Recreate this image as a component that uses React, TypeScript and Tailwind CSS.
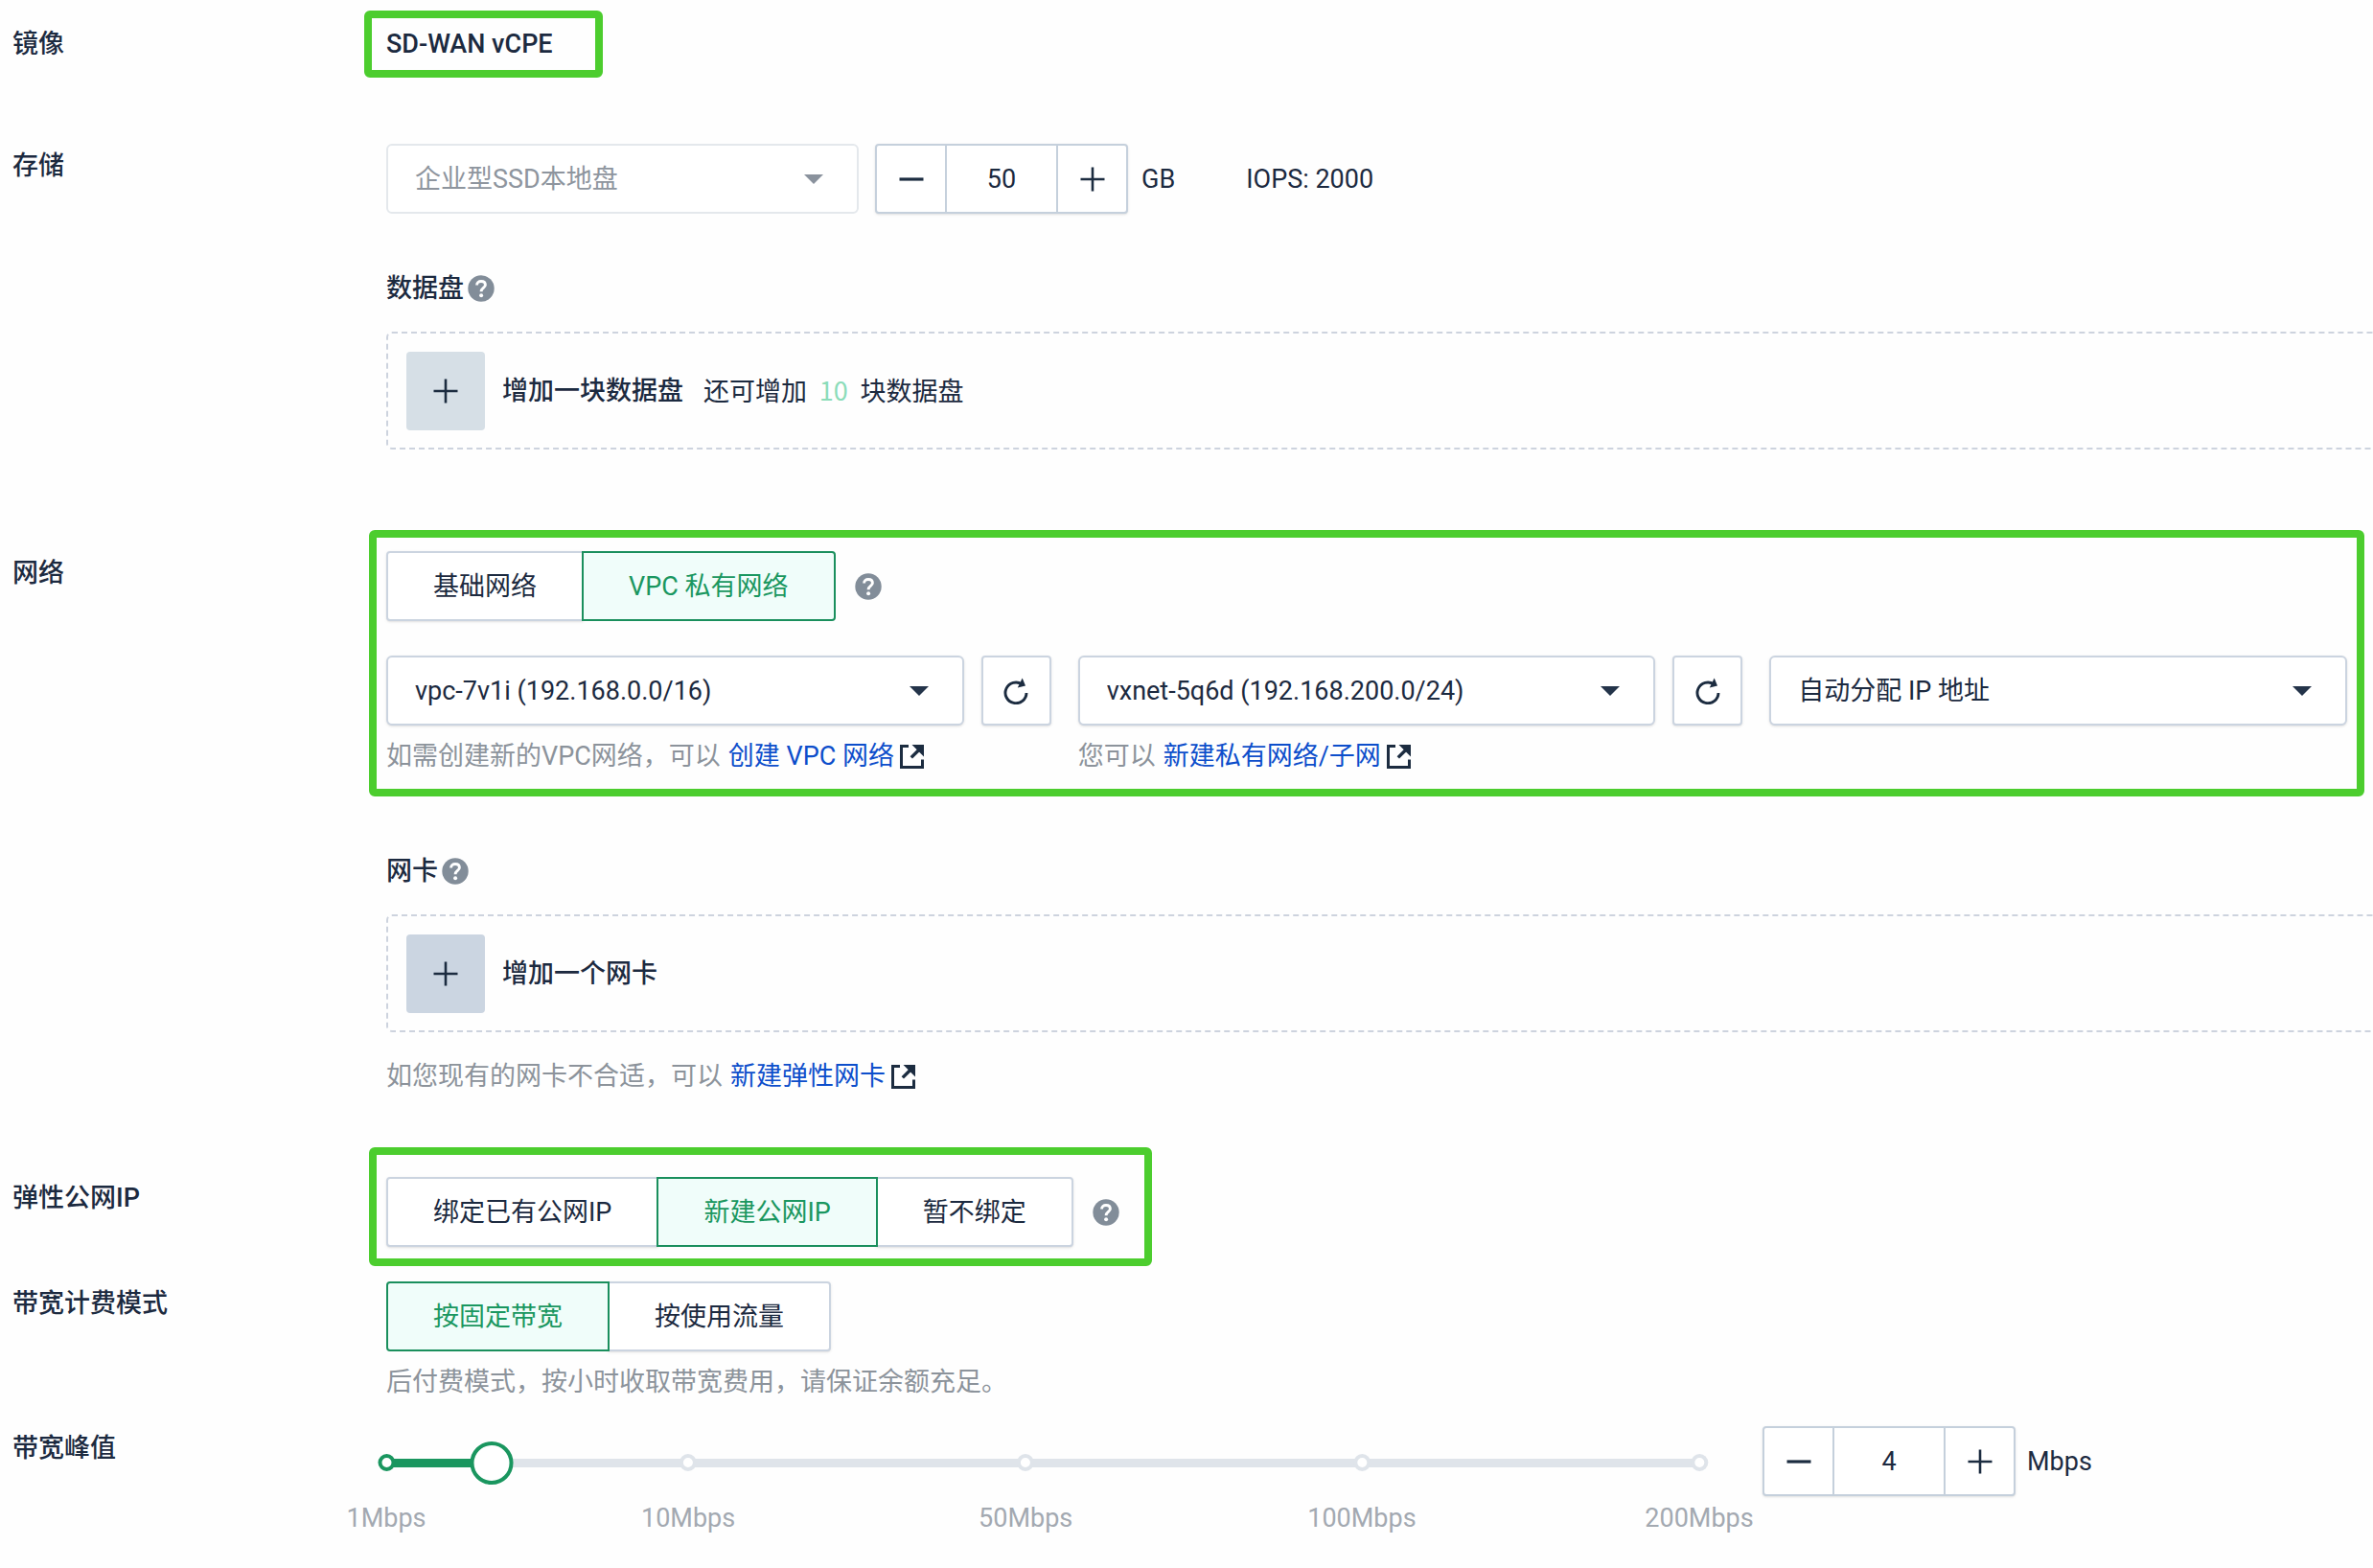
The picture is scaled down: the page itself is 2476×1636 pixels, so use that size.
import { useState } from "react"
import type { ReactNode } from "react"
import clsx from "clsx"

const MARKS = [
  { value: 1, pos: 0 },
  { value: 10, pos: 23 },
  { value: 50, pos: 48.7 },
  { value: 100, pos: 74.3 },
  { value: 200, pos: 100 },
]

// the marks are not evenly spaced, so interpolate inside each segment
function valueToPos(value: number) {
  for (let i = 1; i < MARKS.length; i++) {
    const a = MARKS[i - 1]
    const b = MARKS[i]
    if (value <= b.value) return a.pos + ((value - a.value) / (b.value - a.value)) * (b.pos - a.pos)
  }
  return 100
}

function posToValue(pos: number) {
  for (let i = 1; i < MARKS.length; i++) {
    const a = MARKS[i - 1]
    const b = MARKS[i]
    if (pos <= b.pos) return Math.round(a.value + ((pos - a.pos) / (b.pos - a.pos)) * (b.value - a.value))
  }
  return 200
}

function HelpIcon() {
  return (
    <svg className="w-7 h-7 shrink-0" viewBox="0 0 28 28" fill="none" aria-hidden="true">
      <circle cx="14" cy="14" r="13.7" fill="#828d99" />
      <path
        d="M9.6 10.4C9.6 7.9 11.4 6.5 14 6.5s4.4 1.5 4.4 3.8c0 3.1-4.3 3.3-4.3 6.9"
        stroke="#fff"
        strokeWidth="2.9"
      />
      <circle cx="14.1" cy="21.3" r="2" fill="#fff" />
    </svg>
  )
}

function ExternalIcon() {
  return (
    <svg className="w-[25px] h-[25px] shrink-0 ml-1.5" viewBox="0 0 25 25" fill="none" aria-hidden="true">
      <path d="M9 1.5H1.5V23.5H23.5V15.5" stroke="#1c2c40" strokeWidth="3" />
      <path d="M12.5 0H25V12.5Z" fill="#1c2c40" />
      <path d="M11.8 13.4L20 5.2" stroke="#1c2c40" strokeWidth="3.4" />
    </svg>
  )
}

function RefreshIcon() {
  return (
    <svg className="w-[26px] h-7" viewBox="0 0 26 28" fill="none" aria-hidden="true">
      <path d="M24 16A11 10.8 0 1 1 19.4 7.1" stroke="#1c2c40" strokeWidth="2.9" />
      <path d="M19.7 .6L23 8.6L14.8 10.6Z" fill="#1c2c40" />
    </svg>
  )
}

function PlusIcon() {
  return (
    <svg className="w-[26px] h-[26px]" viewBox="0 0 26 26" aria-hidden="true">
      <path d="M13 .5V25.5M.5 13H25.5" stroke="#1c2c40" strokeWidth="2.6" />
    </svg>
  )
}

function MinusIcon() {
  return (
    <svg className="w-[26px] h-[26px]" viewBox="0 0 26 26" aria-hidden="true">
      <path d="M.5 13H25.5" stroke="#1c2c40" strokeWidth="3.2" />
    </svg>
  )
}

function FormRow({ label, labelClass, className, children }: {
  label: string
  labelClass?: string
  className?: string
  children: ReactNode
}) {
  return (
    <section className={clsx("flex items-start", className)}>
      <h2 className={clsx("w-[403px] shrink-0 pl-[13px] font-medium", labelClass)}>{label}</h2>
      <div className="flex-1 min-w-0">{children}</div>
    </section>
  )
}

function Select({ label, options, disabled, className }: {
  label: string
  options: string[]
  disabled?: boolean
  className?: string
}) {
  return (
    <div className={clsx("relative", className)}>
      <select
        aria-label={label}
        disabled={disabled}
        className={clsx(
          "appearance-none block w-full h-[73px] pl-7 pr-16 rounded-md border-2 bg-white opacity-100",
          disabled ? "border-[#e4e8ec] text-[#8e959e]" : "border-[#cbd4e0] shadow-sm"
        )}
      >
        {options.map((o) => (
          <option key={o}>{o}</option>
        ))}
      </select>
      <svg className="absolute right-[37px] top-8 w-5 h-[10px] pointer-events-none" viewBox="0 0 20 10" aria-hidden="true">
        <path d="M0 0H20L10 10Z" fill={disabled ? "#8a929d" : "#24344a"} />
      </svg>
    </div>
  )
}

function Stepper({ label, value, min, max, step = 1, onChange }: {
  label: string
  value: number
  min: number
  max: number
  step?: number
  onChange: (v: number) => void
}) {
  const set = (v: number) => onChange(Math.min(max, Math.max(min, v)))
  return (
    <div className="flex shrink-0 w-[264px] h-[73px] rounded border-2 border-[#c5d0dc] shadow-sm bg-white">
      <button type="button" aria-label={`减少${label}`} className="w-[71px] flex items-center justify-center" onClick={() => set(value - step)}>
        <MinusIcon />
      </button>
      <input
        type="text"
        inputMode="numeric"
        aria-label={label}
        value={value}
        onChange={(e) => set(Number(e.target.value) || min)}
        className="flex-1 min-w-0 text-center border-x-2 border-[#c5d0dc] outline-none"
      />
      <button type="button" aria-label={`增加${label}`} className="w-[71px] flex items-center justify-center" onClick={() => set(value + step)}>
        <PlusIcon />
      </button>
    </div>
  )
}

function Segments({ options, defaultIndex }: { options: string[]; defaultIndex: number }) {
  const [active, setActive] = useState(defaultIndex)
  return (
    <div className="flex">
      {options.map((o, i) => (
        <button
          key={o}
          type="button"
          aria-pressed={i === active}
          onClick={() => setActive(i)}
          className={clsx(
            "h-[73px] px-[47px] border-2 -ml-0.5 first:ml-0 first:rounded-l last:rounded-r whitespace-nowrap",
            i === active
              ? "relative z-10 border-[#1a8f5d] bg-[#f0fdfa] text-[#1a9760]"
              : "border-[#cbd4e0] bg-white shadow-sm"
          )}
        >
          {o}
        </button>
      ))}
    </div>
  )
}

function AddBox({ tileClass, title, children }: { tileClass: string; title: string; children?: ReactNode }) {
  return (
    <div className="mt-[25px] flex items-center h-[123px] pl-[19px] border-2 border-r-0 border-dashed border-[#cdd3de] rounded-l-md">
      <button type="button" aria-label={title} className={clsx("w-[82px] h-[82px] rounded flex items-center justify-center", tileClass)}>
        <PlusIcon />
      </button>
      <span className="ml-[18px] font-medium">{title}</span>
      {children}
    </div>
  )
}

function Hint({ text, link }: { text: string; link: string }) {
  return (
    <p className="flex items-center text-[#8c939b]">
      {text}
      <a href="#" className="ml-2 flex items-center text-[#0d4ecb]">
        {link}
        <ExternalIcon />
      </a>
    </p>
  )
}

export default function App() {
  const [disk, setDisk] = useState(50)
  const [pos, setPos] = useState(8)
  const bandwidth = posToValue(pos)

  return (
    <main className="min-h-screen overflow-hidden bg-[#fefefe] pt-[11px] pb-8 text-[27px] leading-10 text-[#1c2a40] font-[Roboto,'Noto_Sans_CJK_SC',sans-serif]">
      <FormRow label="镜像" labelClass="pt-[15px]">
        <div className="-ml-[23px] w-[249px] h-[70px] flex items-center border-8 border-[#4ccd2e] rounded-md pl-[15px] font-medium whitespace-nowrap">
          SD-WAN vCPE
        </div>
      </FormRow>

      <FormRow label="存储" labelClass="pt-[3px]" className="mt-[69px]">
        <div className="flex items-center">
          <Select label="存储类型" options={["企业型SSD本地盘"]} disabled className="w-[493px] mr-[17px]" />
          <Stepper label="磁盘容量" value={disk} min={10} max={500} step={10} onChange={setDisk} />
          <span className="ml-[14px]">GB</span>
          <span className="ml-[74px]">IOPS: 2000</span>
        </div>
        <h3 className="mt-[58px] flex items-center gap-1 font-medium">
          数据盘
          <HelpIcon />
        </h3>
        <AddBox tileClass="bg-[#d6dfe6]" title="增加一块数据盘">
          <span className="ml-[21px]">
            还可增加 <span className="mx-1.5 text-[#8bdcb9] font-['Noto_Sans_CJK_SC',sans-serif]">10</span> 块数据盘
          </span>
        </AddBox>
      </FormRow>

      <FormRow label="网络" labelClass="pt-[25px]" className="mt-[84px]">
        <div className="-ml-[18px] mr-[9px] border-8 border-[#4ccd2e] rounded-md px-[10px] py-[14px]">
          <div className="flex items-center gap-5">
            <Segments options={["基础网络", "VPC 私有网络"]} defaultIndex={1} />
            <HelpIcon />
          </div>
          <div className="mt-9 grid grid-cols-[1fr_83px_1fr_83px_1fr] gap-x-[18px] gap-y-3">
            <Select label="VPC 网络" options={["vpc-7v1i (192.168.0.0/16)"]} />
            <button type="button" aria-label="刷新 VPC 网络" className="w-[73px] h-[73px] flex items-center justify-center border-2 border-[#cbd4e0] rounded bg-white shadow-sm">
              <RefreshIcon />
            </button>
            <Select label="私有网络" options={["vxnet-5q6d (192.168.200.0/24)"]} />
            <button type="button" aria-label="刷新私有网络" className="w-[73px] h-[73px] flex items-center justify-center border-2 border-[#cbd4e0] rounded bg-white shadow-sm">
              <RefreshIcon />
            </button>
            <Select label="IP 地址" options={["自动分配 IP 地址"]} />
            <div className="col-span-2">
              <Hint text="如需创建新的VPC网络，可以" link="创建 VPC 网络" />
            </div>
            <div className="col-span-2">
              <Hint text="您可以" link="新建私有网络/子网" />
            </div>
          </div>
        </div>

        <h3 className="mt-[58px] flex items-center gap-1 font-medium">
          网卡
          <HelpIcon />
        </h3>
        <AddBox tileClass="bg-[#cbd5e1]" title="增加一个网卡" />
        <div className="mt-[26px]">
          <Hint text="如您现有的网卡不合适，可以" link="新建弹性网卡" />
        </div>
      </FormRow>

      <FormRow label="弹性公网IP" labelClass="pt-[33px]" className="mt-[54px]">
        <div className="-ml-[18px] w-[817px] flex items-center gap-5 border-8 border-[#4ccd2e] rounded-md pl-[10px] pt-[23px] pb-3">
          <Segments options={["绑定已有公网IP", "新建公网IP", "暂不绑定"]} defaultIndex={1} />
          <HelpIcon />
        </div>
      </FormRow>

      <FormRow label="带宽计费模式" labelClass="pt-[3px]" className="mt-4">
        <Segments options={["按固定带宽", "按使用流量"]} defaultIndex={0} />
        <p className="mt-3 text-[#8c939b]">后付费模式，按小时收取带宽费用，请保证余额充足。</p>
      </FormRow>

      <FormRow label="带宽峰值" labelClass="pt-[3px]" className="mt-[26px]">
        <div className="flex items-start">
          <div className="relative flex-1 max-w-[1370px] h-[120px]">
            <div className="absolute inset-x-0 top-[34px] h-[9px] bg-[#dfe4ea]">
              <div className="h-full bg-[#1a965f]" style={{ width: `${pos}%` }} />
            </div>
            {MARKS.map((m) => (
              <div key={m.value} className="absolute top-0 -translate-x-1/2 flex flex-col items-center" style={{ left: `${m.pos}%` }}>
                <span
                  className={clsx(
                    "mt-[29px] w-[18px] h-[18px] rounded-full border-4 bg-white",
                    m.value <= bandwidth ? "border-[#1a965f]" : "border-[#dfe4ea]"
                  )}
                />
                <span className="mt-[29px] text-[#a3a9b1]">{m.value}Mbps</span>
              </div>
            ))}
            <span
              className="absolute top-4 w-[45px] h-[45px] -translate-x-1/2 rounded-full border-4 border-[#1a965f] bg-white"
              style={{ left: `${pos}%` }}
            />
            <input
              type="range"
              aria-label="带宽峰值"
              min={0}
              max={100}
              step={0.1}
              value={pos}
              onChange={(e) => setPos(Number(e.target.value))}
              className="absolute inset-x-0 top-4 w-full h-11 opacity-0 cursor-pointer"
            />
          </div>
          <div className="ml-[66px] flex items-center">
            <Stepper label="带宽" value={bandwidth} min={1} max={200} onChange={(v) => setPos(valueToPos(v))} />
            <span className="ml-3">Mbps</span>
          </div>
        </div>
      </FormRow>
    </main>
  )
}
